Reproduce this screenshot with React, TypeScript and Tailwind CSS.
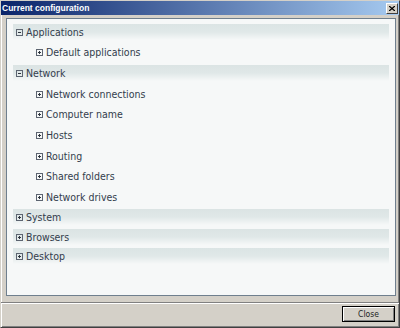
import React from "react";

type Row = { label: string; level: 0 | 1; open?: boolean; h: string };

const rows: Row[] = [
  { label: "Applications", level: 0, open: true, h: "h-[20px]" },
  { label: "Default applications", level: 1, h: "h-[21px]" },
  { label: "Network", level: 0, open: true, h: "h-[21px]" },
  { label: "Network connections", level: 1, h: "h-[20px]" },
  { label: "Computer name", level: 1, h: "h-[21px]" },
  { label: "Hosts", level: 1, h: "h-[21px]" },
  { label: "Routing", level: 1, h: "h-[20px]" },
  { label: "Shared folders", level: 1, h: "h-[21px]" },
  { label: "Network drives", level: 1, h: "h-[20px]" },
  { label: "System", level: 0, h: "h-[20px]" },
  { label: "Browsers", level: 0, h: "h-[19px]" },
  { label: "Desktop", level: 0, h: "h-[19px]" },
];

function Toggle({ open }: { open?: boolean }) {
  return (
    <svg width="7" height="7" viewBox="0 0 7 7" className="shrink-0">
      <rect x="0.5" y="0.5" width="6" height="6" fill="none" stroke="#5c6470" strokeWidth="1" />
      <line x1="2" y1="3.5" x2="5" y2="3.5" stroke="#2f3640" strokeWidth="1" />
      {!open && <line x1="3.5" y1="2" x2="3.5" y2="5" stroke="#2f3640" strokeWidth="1" />}
    </svg>
  );
}

export default function App() {
  const font = { fontFamily: '"DejaVu Sans Condensed", "DejaVu Sans", "Liberation Sans", sans-serif' };
  return (
    <div className="w-[400px] h-[328px] bg-[#d4d0c8] border border-t-[#d4d0c8] border-l-[#d4d0c8] border-r-[#404040] border-b-[#404040] shadow-[inset_1px_1px_#ffffff,inset_-1px_-1px_#808080] flex flex-col">
      <div className="h-[14px] flex items-center justify-between bg-[linear-gradient(to_right,#0a246a,#a6caf0)]">
        <span
          className="pl-[1px] text-white font-bold text-[8.5px] leading-none"
          style={{ fontFamily: '"Liberation Sans", Arial, sans-serif' }}
        >
          Current configuration
        </span>
        <div className="mr-[1px] w-[12px] h-[11px] bg-[#d4d0c8] border border-t-white border-l-white border-r-[#404040] border-b-[#404040] flex items-center justify-center">
          <svg width="6" height="5" viewBox="0 0 6 5">
            <path d="M0 0 L6 5 M6 0 L0 5" stroke="#000" strokeWidth="1.3" />
          </svg>
        </div>
      </div>

      <div className="mt-[3px] ml-[5px] mr-[3px] h-[278px] bg-[#f6f8f8] border border-[#6f7f8e] pt-[5px] px-[6px] flex flex-col">
        {rows.map((r) => (
          <div key={r.label} className={r.h}>
            <div
              className={
                "h-[16px] flex items-center gap-[2px] " +
                (r.level === 0
                  ? "pl-[3px] bg-[linear-gradient(to_bottom,#dbe4e4_0%,#e0e8e8_50%,#f6f8f8_100%)]"
                  : "pl-[23px]")
              }
            >
              <Toggle open={r.open} />
              <span className="text-[10.5px] leading-none text-[#333d4c] ml-[1px]" style={font}>
                {r.label}
              </span>
            </div>
          </div>
        ))}
      </div>

      <div className="mt-[6px] h-[2px] border-t border-t-[#808080] border-b border-b-white" />

      <div className="flex justify-end mt-[2px] mr-[4px]">
        <button
          className="w-[53px] h-[16px] bg-[#d4d0c8] border border-black shadow-[inset_1px_1px_#ffffff,inset_-1px_-1px_#808080] text-[8.5px] leading-none text-[#222]"
          style={font}
        >
          Close
        </button>
      </div>
    </div>
  );
}
